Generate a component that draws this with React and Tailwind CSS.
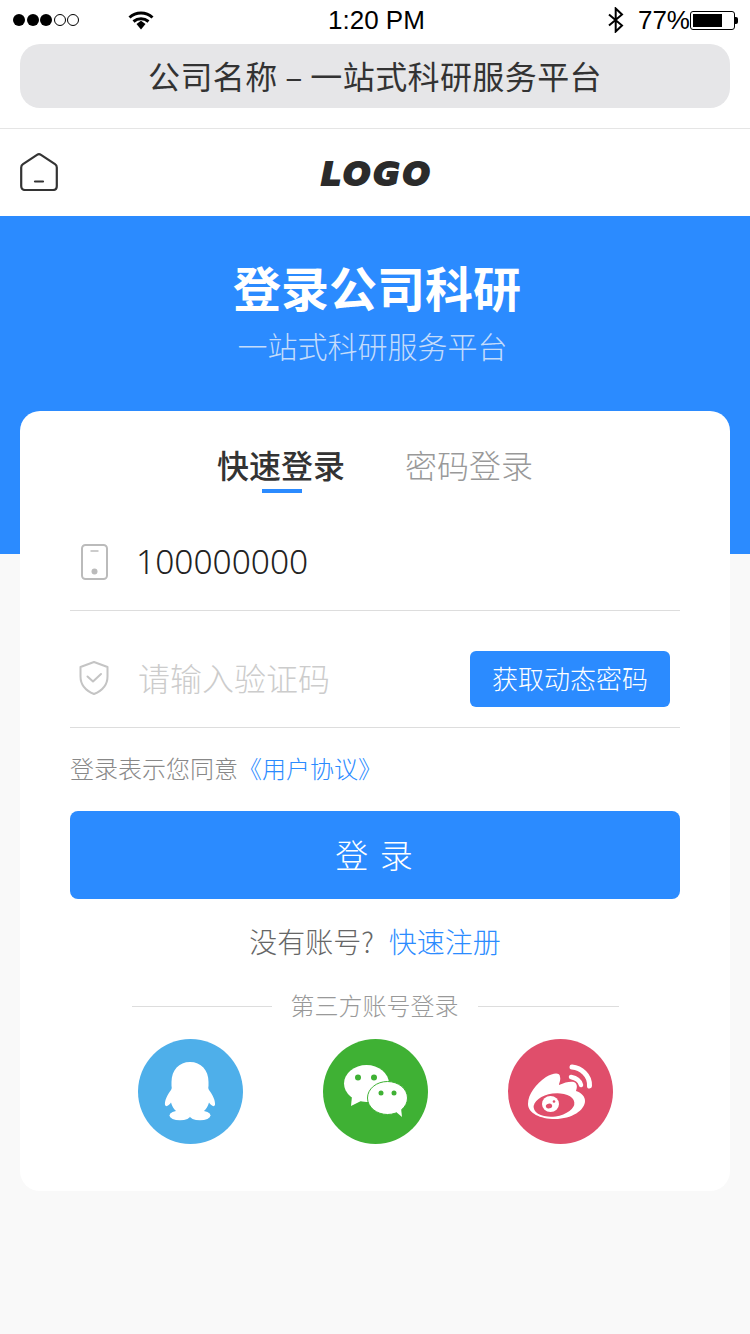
import React from "react";

function Dot({ filled }) {
  return filled
    ? <span className="w-[12px] h-[12px] rounded-full bg-black" />
    : <span className="w-[12px] h-[12px] rounded-full border border-black" />;
}

function StatusBar() {
  return (
    <div className="relative h-[44px] flex items-center justify-between pl-[13px] pr-[12px] pb-[4px] font-['Liberation_Sans',sans-serif] text-[26px] text-black">
      <div className="flex items-center gap-[1.5px] w-[200px]">
        <Dot filled /><Dot filled /><Dot filled /><Dot /><Dot />
        <svg className="ml-[47px]" width="26" height="20" viewBox="0 0 26 20" fill="none">
          <path d="M1.5 7.5C8 1.5 18 1.5 24.5 7.5" stroke="#000" strokeWidth="3" />
          <path d="M5.5 11.5C10 7.8 16 7.8 20.5 11.5" stroke="#000" strokeWidth="3" />
          <path d="M8.5 14L13 10.8L17.5 14L13 19.5Z" fill="#000" />
        </svg>
      </div>
      <span className="leading-[38px] absolute left-[328px] top-[1px]">1:20 PM</span>
      <div className="flex items-center">
        <svg width="18" height="26" viewBox="0 0 18 26" fill="none" className="mr-[13px]">
          <path d="M2 7.5L15 18.5L8.7 24.5V1.5L15 7.5L2 18.5" stroke="#000" strokeWidth="2" />
        </svg>
        <span className="leading-[38px]">77%</span>
        <div className="w-[45px] h-[19px] border border-black rounded-[3px] p-[2px]">
          <div className="w-[29px] h-full bg-black" />
        </div>
        <div className="w-[3px] h-[7px] bg-black rounded-r-[2px]" />
      </div>
    </div>
  );
}

function HomeIcon() {
  return (
    <svg width="38" height="38" viewBox="0 0 38 38" fill="none" stroke="#333" strokeWidth="2.2" strokeLinejoin="round" strokeLinecap="round">
      <path d="M1.2 14.5C1.2 13 1.8 12 3 11.2L17 1.8C18.2 1 19.8 1 21 1.8L35 11.2C36.2 12 36.8 13 36.8 14.5V33C36.8 35.5 35.3 37 33 37H5C2.7 37 1.2 35.5 1.2 33Z" />
      <path d="M15 28.5H23" />
    </svg>
  );
}

function PhoneIcon() {
  return (
    <svg width="27" height="36" viewBox="0 0 27 36" fill="none" stroke="#bbb" strokeWidth="2">
      <rect x="1" y="1" width="25" height="34" rx="3.5" />
      <path d="M9.5 7H17.5" strokeWidth="1.5" />
      <circle cx="13.5" cy="27.5" r="3" fill="#bbb" stroke="none" />
    </svg>
  );
}

function ShieldIcon() {
  return (
    <svg width="30" height="34" viewBox="0 0 30 34" fill="none" stroke="#c4c4c4" strokeWidth="2" strokeLinejoin="round" strokeLinecap="round">
      <path d="M15 1L1.5 6V15.5C1.5 24 7.5 30 15 33C22.5 30 28.5 24 28.5 15.5V6Z" />
      <path d="M8.5 15.5L14 20.5L22 13" />
    </svg>
  );
}

function QQIcon() {
  return (
    <svg width="105" height="105" viewBox="0 0 105 105" className="block">
      <circle cx="52.5" cy="52.5" r="52.5" fill="#4eafea" />
      <path fill="#fff" d="M52 23C41 23 33.5 31 33.5 43V47C34 49 33.5 50 33 51C29 56 26.5 62 27 66C28 68.500 31 66.500 33 63.500C34 67 35.500 70 38 72L52 75L66 72C68.500 70 70 67 71 63.500C73 66.500 76 68.500 77 66C77.500 62 75 56 71 51C70.500 50 70 49 70.500 47V43C70.500 31 63 23 52 23Z" />
      <ellipse cx="42" cy="76.500" rx="10.500" ry="4.800" fill="#fff" />
      <ellipse cx="62" cy="76.500" rx="10.500" ry="4.800" fill="#fff" />
    </svg>
  );
}

function WechatIcon() {
  return (
    <svg width="105" height="105" viewBox="0 0 105 105" className="block">
      <circle cx="52.5" cy="52.5" r="52.5" fill="#3fb134" />
      <ellipse cx="43.500" cy="44.500" rx="22.500" ry="18.500" fill="#fff" />
      <path d="M29 57L28 67L38 62Z" fill="#fff" />
      <circle cx="35" cy="38.500" r="3" fill="#3fb134" />
      <circle cx="51" cy="38.500" r="3" fill="#3fb134" />
      <ellipse cx="64.500" cy="59" rx="20" ry="16.500" fill="#fff" stroke="#3fb134" strokeWidth="1" />
      <path d="M72 72L79 78L78 69Z" fill="#fff" />
      <circle cx="58" cy="54" r="2.500" fill="#3fb134" />
      <circle cx="71" cy="54" r="2.500" fill="#3fb134" />
    </svg>
  );
}

function WeiboIcon() {
  return (
    <svg width="105" height="105" viewBox="0 0 105 105" className="block">
      <circle cx="52.5" cy="52.5" r="52.5" fill="#e04e6b" />
      <path fill="#fff" d="M20 65C20 55 28 45 38 38C45 34 52 33 52 38C53 41 51 44 51 46C57 43 63 42 66 43C70 45 69 49 68 52C74 54 77 58 77 62C77 71 64 80 47 80C32 80 20 74 20 65Z" />
      <ellipse cx="46" cy="66" rx="20.500" ry="11.500" transform="rotate(-8 46 66)" fill="#e04e6b" />
      <ellipse cx="42.500" cy="65" rx="8.500" ry="8" fill="#fff" />
      <ellipse cx="41" cy="67" rx="3.200" ry="2.400" transform="rotate(-15 41 67)" fill="#e04e6b" />
      <circle cx="46" cy="62.500" r="1.300" fill="#e04e6b" />
      <path d="M64 28C73 29 82 36 81.500 47" fill="none" stroke="#fff" strokeWidth="5" strokeLinecap="round" />
      <path d="M63 38C68 39 72 42 73 46" fill="none" stroke="#fff" strokeWidth="4.500" strokeLinecap="round" />
    </svg>
  );
}

export default function App() {
  return (
    <div className="w-[750px] min-h-[1334px] bg-[#f9f9f9] font-['Noto_Sans_CJK_SC',sans-serif] text-[#333]">
      <div className="bg-white">
        <StatusBar />
        <div className="px-[20px] h-[85px] border-b border-[#e5e5e5]">
          <div className="h-[64px] rounded-[20px] bg-[#e6e6e8] flex items-center justify-center pb-[2px] text-[32px] font-normal tracking-[0.4px] text-[#333]">
            公司名称 – 一站式科研服务平台
          </div>
        </div>
        <div className="relative h-[87px] flex items-center justify-center">
          <div className="absolute left-[20px] top-[24px]"><HomeIcon /></div>
          <span className="font-['DejaVu_Sans',sans-serif] font-bold italic text-[32px] leading-none tracking-[3px] text-[#2b2b2b] [-webkit-text-stroke:2px_#2b2b2b] mt-[2px] ml-[4px]">LOGO</span>
        </div>
      </div>

      <div className="h-[338px] bg-[#2b8bff] flex flex-col items-center text-white">
        <div className="text-[48px] font-bold leading-[60px] mt-[40px] ml-[4px]">登录公司科研</div>
        <div className="text-[30px] font-light leading-[40px] mt-[9px] mr-[5px] text-[#c4dcfb]">一站式科研服务平台</div>
      </div>

      <div className="relative mx-[20px] -mt-[143px] h-[780px] rounded-[20px] bg-white px-[50px]">
        <div className="flex justify-center gap-[60px] h-[82px] pt-[30px]">
          <div className="relative text-[32px] font-medium leading-[46px] h-[46px]">
            快速登录
            <div className="absolute left-[45px] top-[48px] w-[40px] h-[4px] bg-[#2b8bff]" />
          </div>
          <div className="text-[32px] font-light leading-[46px] h-[46px] text-[#999]">密码登录</div>
        </div>

        <div className="h-[118px] border-b border-[#ddd] flex items-center pl-[11px] pt-[20px]">
          <PhoneIcon />
          <span className="ml-[28px] text-[33.5px] font-['Noto_Sans',sans-serif] font-light text-[#222] leading-none">100000000</span>
        </div>

        <div className="h-[117px] border-b border-[#ddd] flex items-center pl-[9px] pr-[10px] pt-[18px] justify-between">
          <div className="flex items-center">
            <ShieldIcon />
            <span className="ml-[29px] -mt-[2px] text-[32px] font-light text-[#ccc]">请输入验证码</span>
          </div>
          <button className="w-[200px] h-[56px] mt-[2px] pb-[3px] bg-[#2b8bff] rounded-[6px] text-white text-[26px] font-light">获取动态密码</button>
        </div>

        <div className="h-[83px] flex items-center pb-[4px] text-[24px] font-light text-[#888]">
          <span>登录表示您同意</span><span className="text-[#2b8bff]">《用户协议》</span>
        </div>

        <button className="block w-[610px] h-[88px] rounded-[8px] bg-[#2b8bff] text-white text-[33px] tracking-[2px] font-light">登 录</button>

        <div className="h-[88px] flex items-center justify-center pb-[4px] text-[28px] font-light text-[#666]">
          <span>没有账号?</span><span className="ml-[15px] text-[#2b8bff]">快速注册</span>
        </div>

        <div className="flex items-center justify-center h-[38px] pb-[2px] text-[24px] font-light text-[#999]">
          <div className="w-[140px] h-px bg-[#ddd] mt-[2px]" />
          <span className="mx-[19px]">第三方账号登录</span>
          <div className="w-[141px] h-px bg-[#ddd] mt-[2px]" />
        </div>

        <div className="flex justify-center gap-[80px] mt-[14px]">
          <QQIcon />
          <WechatIcon />
          <WeiboIcon />
        </div>
      </div>
    </div>
  );
}
